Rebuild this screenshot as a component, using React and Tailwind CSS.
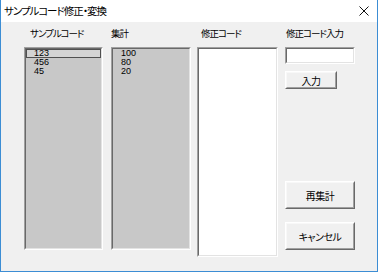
import React from "react";

const jp = "font-['Noto_Sans_CJK_JP','Noto_Sans',sans-serif] [font-feature-settings:'palt'] whitespace-nowrap";
const list = "font-['Liberation_Sans',Arial,sans-serif]";

const Sunken = ({ className = "", inner = "", children }) => (
  <div className={`border border-t-[#a0a0a0] border-l-[#a0a0a0] border-r-white border-b-white ${className}`}>
    <div className={`h-full border border-t-[#696969] border-l-[#696969] border-r-[#e3e3e3] border-b-[#e3e3e3] ${inner}`}>
      {children}
    </div>
  </div>
);

const Button = ({ className = "", children }) => (
  <div className={`border border-t-white border-l-white border-r-[#696969] border-b-[#696969] ${className}`}>
    <div className="h-full border border-t-[#f8f8f8] border-l-[#f8f8f8] border-r-[#a0a0a0] border-b-[#a0a0a0] bg-[#f0f0f0] flex items-center justify-center text-[10px] tracking-[-0.5px] text-black">
      {children}
    </div>
  </div>
);

const Items = ({ items, selected }) => (
  <div className={`${list} text-[9px] leading-[9px] tracking-normal text-black`}>
    {items.map((it, i) => (
      <div
        key={i}
        className={
          i === selected
            ? "h-[9px] border border-[#505050] bg-[#d4d4d4] pl-[7px] leading-[7px]"
            : "h-[9px] pl-[8px]"
        }
      >
        {it}
      </div>
    ))}
  </div>
);

export default function App() {
  return (
    <div className={`w-[378px] h-[272px] bg-[#f0f0f0] border-x border-b border-[#3c8dd4] flex flex-col ${jp}`}>
      {/* title bar */}
      <div className="h-[22px] bg-white flex items-center justify-between shrink-0">
        <span className="pl-[3px] text-[10.5px] tracking-[-1px] text-black leading-none">サンプルコード修正・変換</span>
        <svg width="10" height="10" viewBox="0 0 10 10" className="mr-[8px]">
          <path d="M0.5 0.5L9.5 9.5M9.5 0.5L0.5 9.5" stroke="#111" strokeWidth="1" />
        </svg>
      </div>

      {/* body */}
      <div className="flex pl-[23px] pt-[4px] text-[9.5px] tracking-[-1px] text-black">
        <div className="w-[79px] flex flex-col">
          <div className="h-[14px] leading-[14px] pl-[6px]">サンプルコード</div>
          <Sunken className="mt-[7px] h-[203px]" inner="bg-[#c8c8c8]">
            <Items items={["123", "456", "45"]} selected={0} />
          </Sunken>
        </div>

        <div className="w-[80px] ml-[8px] flex flex-col">
          <div className="h-[14px] leading-[14px]">集計</div>
          <Sunken className="mt-[7px] h-[203px]" inner="bg-[#c8c8c8]">
            <Items items={["100", "80", "20"]} />
          </Sunken>
        </div>

        <div className="w-[81px] ml-[6px] flex flex-col">
          <div className="h-[14px] leading-[14px] pl-[4px]">修正コード</div>
          <Sunken className="mt-[7px] h-[210px]" inner="bg-white" />
        </div>

        <div className="w-[70px] ml-[7px] flex flex-col">
          <div className="h-[14px] leading-[14px] pl-px">修正コード入力</div>
          <Sunken className="mt-[7px] h-[17px]" inner="bg-white" />
          <Button className="mt-[7px] w-[52px] h-[18px]">入力</Button>
          <Button className="mt-[92px] h-[28px]">再集計</Button>
          <Button className="mt-[13px] h-[28px]">キャンセル</Button>
        </div>
      </div>
    </div>
  );
}
